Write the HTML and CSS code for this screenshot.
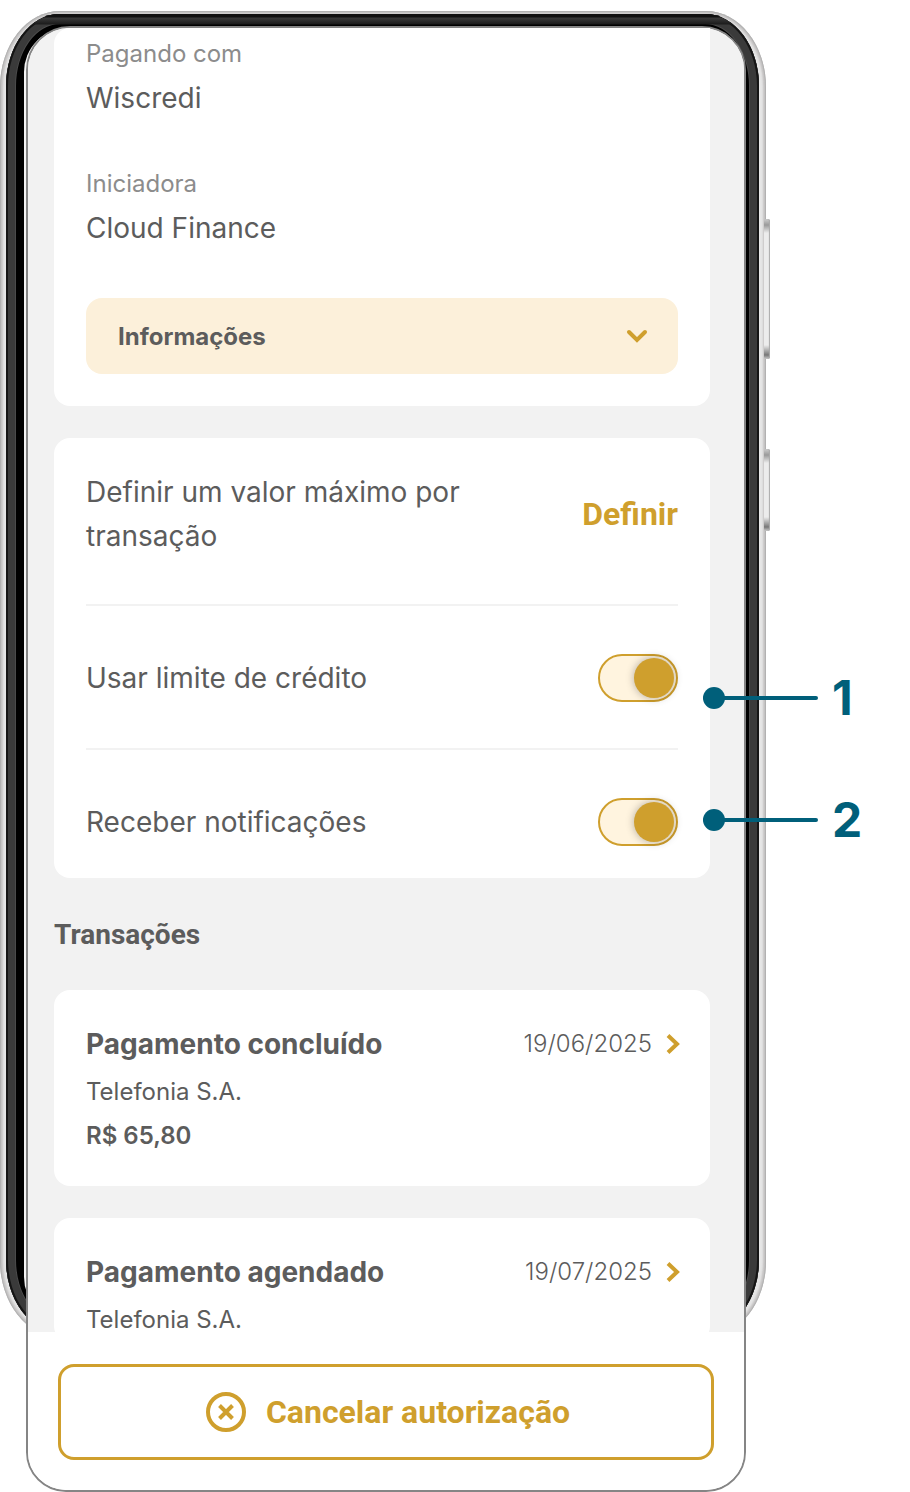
FILE: index.html
```
<!DOCTYPE html>
<html lang="pt-BR">

<head>
    <meta charset="UTF-8">
    <meta name="viewport" content="width=device-width, initial-scale=1">
    <title>Autorização de pagamento</title>
    <link rel="stylesheet" href="styles.css">
</head>

<body>

    <div class="phone">
        <!-- phone body behind the screen -->
        <div class="frame" aria-hidden="true">
            <div class="side-key volume"></div>
            <div class="side-key power"></div>
            <div class="bezel"></div>
            <div class="glass"></div>
        </div>

        <div class="screen">
            <main class="content">
                <section class="card details">
                    <dl>
                        <div class="detail">
                            <dt>Pagando com</dt>
                            <dd>Wiscredi</dd>
                        </div>
                        <div class="detail">
                            <dt>Iniciadora</dt>
                            <dd>Cloud Finance</dd>
                        </div>
                    </dl>
                    <button type="button" class="info-toggle" aria-expanded="false">
                        Informações
                        <svg width="24" height="24" viewBox="0 0 24 24" fill="none" stroke="currentColor" stroke-width="4" stroke-linecap="round">
                            <path d="M4 8l8 8 8-8" />
                        </svg>
                    </button>
                </section>

                <section class="card settings">
                    <div class="setting">
                        <span>Definir um valor máximo por transação</span>
                        <button type="button" class="define">Definir</button>
                    </div>
                    <div class="setting">
                        <label for="credit">Usar limite de crédito</label>
                        <input type="checkbox" class="switch" id="credit" checked>
                    </div>
                    <div class="setting">
                        <label for="notifications">Receber notificações</label>
                        <input type="checkbox" class="switch" id="notifications" checked>
                    </div>

                    <div class="callout callout-credit">1</div>
                    <div class="callout callout-notifications">2</div>
                </section>

                <h2>Transações</h2>

                <a href="#" class="card transaction">
                    <div class="transaction-head">
                        <h3>Pagamento concluído</h3>
                        <time datetime="2025-06-19">19/06/2025</time>
                        <svg width="14" height="24" viewBox="0 0 14 24" fill="none" stroke="currentColor" stroke-width="4">
                            <path d="M2 3.5l9 8.5-9 8.5" />
                        </svg>
                    </div>
                    <p>Telefonia S.A.</p>
                    <p class="amount">R$ 65,80</p>
                </a>

                <a href="#" class="card transaction last">
                    <div class="transaction-head">
                        <h3>Pagamento agendado</h3>
                        <time datetime="2025-07-19">19/07/2025</time>
                        <svg width="14" height="24" viewBox="0 0 14 24" fill="none" stroke="currentColor" stroke-width="4">
                            <path d="M2 3.5l9 8.5-9 8.5" />
                        </svg>
                    </div>
                    <p>Telefonia S.A.</p>
                </a>
            </main>

            <footer class="actions">
                <button type="button" class="cancel">
                    <svg width="40" height="40" viewBox="0 0 40 40" fill="none" stroke="currentColor" stroke-width="4">
                        <circle cx="20" cy="20" r="18" />
                        <path d="M13.5 13.5l13 13M26.5 13.5l-13 13" />
                    </svg>
                    Cancelar autorização
                </button>
            </footer>
        </div>
    </div>

</body>

</html>
```

FILE: styles.css
```
* {
    box-sizing: border-box;
}

body {
    margin: 0;
    padding: 11px 144px 0 0;
    background: #fff;
    font-family: Inter, 'Liberation Sans', sans-serif;
    color: #5c5c5c;
}

h2,
h3,
p,
dl,
dd {
    margin: 0;
}

button {
    border: none;
    font-family: inherit;
    cursor: pointer;
}

/* phone body */
.phone {
    position: relative;
    padding: 15px 20px 0 26px;
}

.frame {
    position: absolute;
    inset: 0 0 155px 0;
    border-radius: 60px / 76px;
    background: #e6e6e6;
    box-shadow: inset 0 0 1px 1px #b0b0b0, inset 0 0 2px 3px #c6c4c4;
}

.bezel {
    position: absolute;
    inset: 3px 7px 5px 6px;
    border-radius: 54px / 72px;
    background: #000;
    box-shadow: inset 0 0 0 2px #151515, inset 0 0 0 9px #3a3a3a, inset 0 0 0 10px #4a4a4a;
}

.bezel::before {
    content: "";
    position: absolute;
    inset: 0;
    border-radius: inherit;
    background: linear-gradient(#111 3px, #3a3a3a 4px, #1c1c1c 10px, transparent 11px);
}

.glass {
    position: absolute;
    inset: 17px 22px 16px 24px;
    border-radius: 44px;
    background: #f4f4f4;
}

.side-key {
    position: absolute;
    right: -4px;
    width: 6px;
    border-radius: 2px;
    background: linear-gradient(#ccc, #999 6px, #ececec 14px, #ececec calc(100% - 14px), #777 calc(100% - 4px), #ccc);
    box-shadow: inset -1px 0 1px #aaa;
}

.volume {
    top: 208px;
    height: 140px;
}

.power {
    top: 438px;
    height: 82px;
}

.screen {
    position: relative;
    border: 2px solid #858585;
    border-radius: 44px 44px 40px 40px;
    background: #fff;
}

.content {
    padding: 0 34px 0 26px;
    border-radius: 42px 42px 0 0;
    background: #f2f2f2;
}

.card {
    display: block;
    padding: 32px;
    border-radius: 16px;
    background: #fff;
}

/* payment details */
.details {
    padding-top: 8px;
    border-top-right-radius: 0;
}

.detail {
    margin-bottom: 46px;
}

.detail:last-child {
    margin-bottom: 48px;
}

dt {
    margin-bottom: 4px;
    font-size: 24px;
    line-height: 36px;
    color: #8c8c8c;
}

dd {
    font-size: 28px;
    line-height: 44px;
}

.info-toggle {
    display: flex;
    align-items: center;
    justify-content: space-between;
    width: 100%;
    height: 76px;
    padding: 0 29px 0 32px;
    border-radius: 16px;
    background: #fcf0da;
    color: #5c5c5c;
    font-size: 24px;
    font-weight: 700;
}

.info-toggle svg,
.transaction svg {
    color: #cf9f2d;
}

/* settings */
.settings {
    position: relative;
    margin-top: 32px;
}

.setting {
    display: flex;
    align-items: center;
    justify-content: space-between;
    gap: 32px;
    padding: 48px 0 46px;
    border-bottom: 2px solid #f2f2f2;
    font-size: 28px;
    line-height: 44px;
}

.setting:first-child {
    padding-top: 0;
}

.setting:nth-child(3) {
    padding-bottom: 0;
    border-bottom: none;
}

.setting span {
    max-width: 400px;
}

.define {
    padding: 0;
    background: none;
    color: #cf9f2d;
    font-family: Roboto, sans-serif;
    font-size: 32px;
    font-weight: 700;
}

.switch {
    appearance: none;
    flex: none;
    display: flex;
    align-items: center;
    width: 80px;
    height: 48px;
    margin: 0;
    padding: 2px;
    border: 2px solid #cf9f2d;
    border-radius: 24px;
    background: #fff4df;
    cursor: pointer;
}

.switch::before {
    content: "";
    width: 40px;
    height: 40px;
    border-radius: 50%;
    background: #cf9f2d;
    box-shadow: 0 0 8px rgba(0, 0, 0, 0.3);
}

.switch:checked {
    justify-content: flex-end;
}

/* numbered markers that point at the switches */
.callout {
    position: absolute;
    left: calc(100% - 7px);
    display: flex;
    align-items: center;
    height: 48px;
    color: #005f7a;
    font-size: 48px;
    font-weight: 700;
    line-height: 48px;
}

.callout::before {
    content: "";
    width: 22px;
    height: 22px;
    margin-right: 107px;
    border-radius: 50%;
    background: #005f7a;
}

.callout::after {
    content: "";
    order: -1;
    width: 115px;
    height: 4px;
    margin-right: -115px;
    border-radius: 2px;
    background: #005f7a;
}

.callout-credit {
    top: 236px;
}

.callout-notifications {
    top: 358px;
}

/* transactions */
h2 {
    margin: 37px 0 35px;
    font-family: Roboto, sans-serif;
    font-size: 28px;
    font-weight: 700;
    line-height: 40px;
}

.transaction {
    padding-right: 30px;
    padding-bottom: 28px;
    color: #5c5c5c;
    font-size: 24px;
    line-height: 44px;
    text-decoration: none;
}

.transaction-head {
    display: flex;
    align-items: center;
    gap: 14px;
    margin-bottom: 4px;
}

h3 {
    flex: 1;
    font-size: 28px;
    font-weight: 700;
}

time {
    font-weight: 300;
}

.amount {
    font-weight: 600;
}

.last {
    margin-top: 32px;
    padding-bottom: 0;
}

/* bottom bar, lies over the end of the list */
.actions {
    position: relative;
    margin-top: -10px;
    padding: 32px 30px 30px;
    border-radius: 0 0 38px 38px;
    background: #fff;
}

.cancel {
    display: flex;
    align-items: center;
    justify-content: center;
    gap: 20px;
    width: 100%;
    height: 96px;
    padding: 0 4px 0 8px;
    border: 3px solid #cf9f2d;
    border-radius: 16px;
    background: #fff;
    color: #cf9f2d;
    font-family: Roboto, sans-serif;
    font-size: 32px;
    font-weight: 700;
}
```
